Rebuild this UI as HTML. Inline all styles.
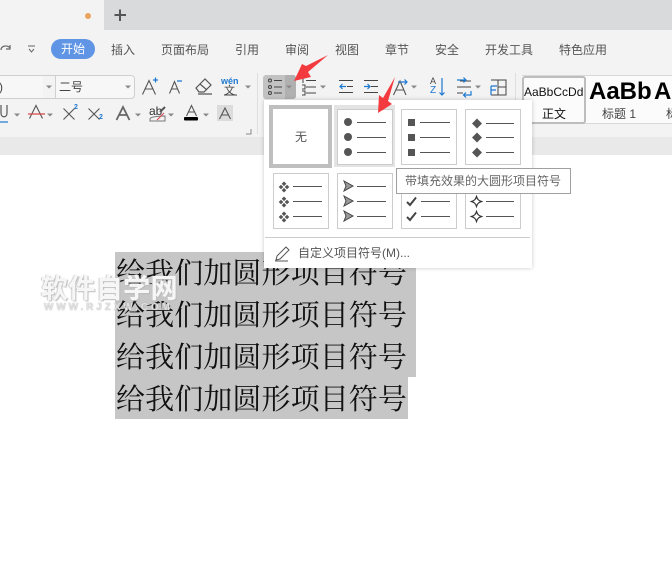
<!DOCTYPE html>
<html><head><meta charset="utf-8">
<style>
html,body{margin:0;padding:0;background:#fff}
#p{position:relative;width:672px;height:562px;overflow:hidden;background:#fff;font-family:"Liberation Sans","Noto Sans CJK SC",sans-serif;color:#444}
.a{position:absolute;white-space:nowrap}
.m{position:absolute;top:42px;font-size:12px;line-height:16px;color:#555;white-space:nowrap}
.l{position:absolute;left:116px;font-family:"Liberation Serif","Noto Serif CJK SC",serif;font-size:29px;line-height:42px;height:42px;letter-spacing:0.1px;color:#111;white-space:nowrap}
.cell{position:absolute;width:54px;height:54px;border:1px solid #ccc;background:#fff;box-sizing:content-box}
svg{position:absolute;overflow:visible}
</style></head><body><div id="p">

<!-- title bar -->
<div class="a" style="left:0;top:0;width:672px;height:30px;background:#d9dadc"></div>
<div class="a" style="left:0;top:0;width:104px;height:30px;background:#f3f3f3"></div>
<div class="a" style="left:85px;top:13px;width:6px;height:6px;border-radius:50%;background:#e6a35f"></div>
<svg style="left:0;top:0" width="672" height="160">
<path d="M114.500 15H126M120 9.500V21" stroke="#555" stroke-width="2" fill="none"/>
</svg>

<!-- ribbon -->
<div class="a" style="left:0;top:30px;width:672px;height:107px;background:#f3f3f3"></div>
<div class="a" style="left:0;top:137px;width:672px;height:18px;background:#e9e9e9"></div>

<div class="a" style="left:51px;top:39px;width:44px;height:20px;border-radius:10px;background:#5f95e4;color:#fff;font-size:12px;line-height:20px;text-align:center">开始</div>
<div class="m" style="left:111px">插入</div>
<div class="m" style="left:161px">页面布局</div>
<div class="m" style="left:235px">引用</div>
<div class="m" style="left:285px">审阅</div>
<div class="m" style="left:335px">视图</div>
<div class="m" style="left:385px">章节</div>
<div class="m" style="left:435px">安全</div>
<div class="m" style="left:485px">开发工具</div>
<div class="m" style="left:559px">特色应用</div>

<!-- font combos -->
<div class="a" style="left:-6px;top:75px;width:141px;height:24px;border:1px solid #cfcfcf;border-radius:4px;background:#f7f7f7;box-sizing:border-box"></div>
<div class="a" style="left:43px;top:76px;width:12px;height:22px;background:#f3f3f3"></div>
<div class="a" style="left:55px;top:76px;width:1px;height:22px;background:#d0d0d0"></div>
<div class="a" style="left:59px;top:79px;font-size:12px;line-height:16px;color:#444">二号</div>
<div class="a" style="left:-1px;top:79px;font-size:12px;line-height:16px;color:#444">)</div>

<div class="a" style="left:221px;top:76px;font-size:9px;line-height:10px;color:#1c78d0;font-weight:bold">wén</div>
<div class="a" style="left:224px;top:85px;font-size:11px;line-height:12px;color:#444">文</div>
<div class="a" style="left:149px;top:104px;font-size:12px;line-height:14px;color:#333">ab</div>
<div class="a" style="left:217px;top:105px;width:16px;height:16px;background:#dcdcdc"></div>
<div class="a" style="left:74px;top:104px;font-size:7px;line-height:8px;color:#1c78d0;font-weight:bold">2</div>
<div class="a" style="left:99px;top:114px;font-size:7px;line-height:8px;color:#1c78d0;font-weight:bold">2</div>
<div class="a" style="left:430px;top:76px;font-size:9px;line-height:10px;color:#444">A</div>
<div class="a" style="left:430px;top:86px;font-size:10px;line-height:10px;color:#1c78d0">Z</div>

<!-- list button highlight -->
<div class="a" style="left:263px;top:75px;width:33px;height:24px;background:#c2c2c2;border-radius:3px"></div>
<div class="a" style="left:285px;top:75px;width:11px;height:24px;background:#b0b0b0;border-radius:0 3px 3px 0"></div>

<svg style="left:0;top:0" width="672" height="160" fill="none">
<!-- undo / qa -->
<path d="M1 50C1 46 6 45 9 47L10 48M10 45V49H6" stroke="#666" stroke-width="1.200"/>
<path d="M28 46H35M29 49L31.500 52L34 49" stroke="#666"/>
<!-- thin A icons -->
<g stroke="#555" stroke-width="1.100">
<path d="M142.500 94.500L149 80.500L155.500 94.500M145 89H153"/>
<path d="M169.500 93.500L174.500 81.500L179.500 93.500M171.500 89H177.500"/>
<path d="M29.500 118.500L36 105.500L42.500 118.500"/>
<path d="M63.500 108.500L74.500 119.500M74.500 108.500L63.500 119.500"/>
<path d="M88.500 108.500L99.500 119.500M99.500 108.500L88.500 119.500"/>
<path d="M116.500 120L123 107L129.500 120M119 115H127" stroke-width="1.800" stroke="#666"/>
<path d="M186.500 116L191.500 105.500L196.500 116M188.500 112H194.500"/>
<path d="M219.500 119L225 108L230.500 119M221.500 115H228.500"/>
<path d="M393.500 95L400 81L406 95M396 90H404"/>
</g>
<!-- eraser -->
<path d="M196 88L205 79L211 85L204 92H199ZM200 84L207 90M198 94H212" stroke="#555" stroke-width="1.200"/>
<path d="M224 95H237" stroke="#444"/>
<!-- plus/minus -->
<path d="M153 80H158M155.500 77.500V82.500M177 81H182" stroke="#1c78d0" stroke-width="1.200"/>
<!-- underline -->
<path d="M1 105V113C1 118 7 118 7 113V105" stroke="#555" stroke-width="1.200"/>
<path d="M-2 122H8" stroke="#1c78d0" stroke-width="1.200"/>
<path d="M28 114H45" stroke="#d9464a" stroke-width="1.200"/>
<path d="M150 119C150 116 165 116 165 116V121H150Z" stroke="#777"/>
<path d="M157 120L164 113" stroke="#d9464a"/>
<path d="M160 112L165 107" stroke="#555" stroke-width="2"/>
<rect x="184" y="117" width="14" height="3.500" rx="1" fill="#000"/>
<!-- dialog launcher -->
<path d="M246 134H251V129" stroke="#888"/>
<path d="M257.500 73V134M515.500 73V134" stroke="#dedede"/>
<!-- carets -->
<path d="M245 85.500h6l-3 3zM14 113.500h6l-3 3zM47 113.500h6l-3 3zM135 113.500h6l-3 3zM168 113.500h6l-3 3zM203 113.500h6l-3 3zM286 85.500h6l-3 3zM320 85.500h6l-3 3zM411 85.500h6l-3 3zM475 85.500h6l-3 3zM46 85.500h6l-3 3zM125 85.500h6l-3 3z" fill="#888"/>
<!-- bullets icon -->
<g stroke="#444">
<circle cx="270" cy="80.500" r="1.500"/><circle cx="270" cy="87" r="1.500"/><circle cx="270" cy="93" r="1.500"/>
<path d="M274 80.500H282M274 87H282M274 93H282"/>
<path d="M306 80.500H316M306 87H316M306 93H316M303 78V83M302 85H305V89H302M302 91H305V95H302"/>
<!-- indents -->
<path d="M339 80.500H353M347 86.500H353M339 92.500H353"/>
<path d="M364 80.500H378M371 86.500H378M364 92.500H378"/>
<!-- line spacing -->
<path d="M460 81H471M457 87H471M457 93H463"/>
<!-- table -->
<path d="M491 80H506V95H491M498 80V95M498 87H506"/>
</g>
<g stroke="#1c78d0" stroke-width="1.200">
<path d="M340 86.500H346M342.500 84L340 86.500L342.500 89"/>
<path d="M364 86.500H370M367.500 84L370 86.500L367.500 89"/>
<path d="M398 82H407M404.500 79.500L407 82L404.500 84.500"/>
<path d="M442 78V95M439.500 92.500L442 95L444.500 92.500"/>
<path d="M457 80H466M463.500 77.500L466 80L463.500 82.500M471 91V95H464M466 92.500L463.500 95L466 97.500"/>
<path d="M491 86V95M491 86H497M491 90H496"/>
</g>
</svg>

<!-- styles gallery -->
<div class="a" style="left:522px;top:75px;width:150px;height:49px;background:#fbfbfb;border-top:1px solid #d8d8d8;border-bottom:1px solid #d8d8d8;box-sizing:border-box"></div>
<div class="a" style="left:522px;top:76px;width:64px;height:48px;background:#fbfbfb;border:2px solid #bdbdbd;border-radius:3px;box-sizing:border-box"></div>
<div class="a" style="left:524px;top:85px;font-size:12px;line-height:15px;color:#111">AaBbCcDd</div>
<div class="a" style="left:542px;top:107px;font-size:12px;line-height:15px;color:#111">正文</div>
<div class="a" style="left:589px;top:78px;font-size:24px;line-height:28px;font-weight:bold;color:#000">AaBb</div>
<div class="a" style="left:654px;top:78px;font-size:24px;line-height:28px;font-weight:bold;color:#000">Aa</div>
<div class="a" style="left:602px;top:107px;font-size:12px;line-height:15px;color:#444">标题 1</div>
<div class="a" style="left:666px;top:107px;font-size:12px;line-height:15px;color:#444">标</div>

<!-- selected document text -->
<div class="a" style="left:115px;top:252px;width:301px;height:125px;background:#c6c6c6"></div>
<div class="a" style="left:115px;top:377px;width:293px;height:42px;background:#c6c6c6"></div>
<div class="l" style="top:253px">给我们加圆形项目符号</div>
<div class="l" style="top:295px">给我们加圆形项目符号</div>
<div class="l" style="top:337px">给我们加圆形项目符号</div>
<div class="l" style="top:379px">给我们加圆形项目符号</div>

<!-- watermark -->
<div class="a" style="left:41px;top:274px;font-size:27px;line-height:30px;font-weight:bold;letter-spacing:0.400px;color:#f6f6f6;text-shadow:1px 1px 1px #bbb,-1px 0 1px #ccc">软件自学网</div>
<div class="a" style="left:44px;top:302px;font-size:10px;line-height:12px;font-weight:bold;letter-spacing:2.900px;color:#e2e2e2;text-shadow:0 0 1px #999">WWW.RJZXW.COM</div>

<!-- dropdown -->
<div class="a" style="left:264px;top:100px;width:268px;height:168px;background:#fff;box-shadow:0 0 4px rgba(0,0,0,.22)"></div>
<div class="a" style="left:269px;top:105px;width:63px;height:63px;background:#bfbfbf"></div>
<div class="a" style="left:273px;top:109px;width:55px;height:55px;background:#fff"></div>
<div class="a" style="left:295px;top:129px;font-size:12px;line-height:16px;color:#555">无</div>
<div class="a" style="left:334px;top:105px;width:61px;height:62px;background:#e4e4e4"></div>
<div class="cell" style="left:337px;top:109px"></div>
<div class="cell" style="left:401px;top:109px"></div>
<div class="cell" style="left:465px;top:109px"></div>
<div class="cell" style="left:273px;top:173px"></div>
<div class="cell" style="left:337px;top:173px"></div>
<div class="cell" style="left:401px;top:173px"></div>
<div class="cell" style="left:465px;top:173px"></div>
<div class="a" style="left:265px;top:237px;width:265px;height:1px;background:#ccc"></div>
<div class="a" style="left:298px;top:245px;font-size:12px;line-height:17px;color:#555">自定义项目符号(M)...</div>

<svg style="left:0;top:0" width="672" height="300" fill="none">
<!-- lines -->
<g stroke="#555" stroke-width="1.100">
<path d="M357 122.500H386M357 137.500H386M357 152.500H386"/>
<path d="M420 122.500H450M420 137.500H450M420 152.500H450"/>
<path d="M486 123.500H514M486 137.500H514M486 152.500H514"/>
<path d="M293 186.500H322M293 201.500H322M293 216.500H322"/>
<path d="M357 186.500H386M357 201.500H386M357 216.500H386"/>
<path d="M421 201.500H450M421 216.500H450"/>
<path d="M486 201.500H514M486 216.500H514"/>
</g>
<g fill="#555"><circle cx="348" cy="122" r="4"/><circle cx="348" cy="137" r="4"/><circle cx="348" cy="152" r="4"/>
<rect x="408" y="119" width="7" height="7"/><rect x="408" y="134" width="7" height="7"/><rect x="408" y="149" width="7" height="7"/>
<path d="M477 118.500L482 123.500L477 128.500L472 123.500ZM477 132.500L482 137.500L477 142.500L472 137.500ZM477 147.500L482 152.500L477 157.500L472 152.500Z"/>
<!-- four-diamond clusters -->
<path d="M284 181.500l2.300 2.300-2.300 2.300-2.300-2.300zM281 184.700l2.300 2.300-2.300 2.300-2.300-2.300zM287 184.700l2.300 2.300-2.300 2.300-2.300-2.300zM284 187.900l2.300 2.300-2.300 2.300-2.300-2.300z"/>
<path d="M284 196.500l2.300 2.300-2.300 2.300-2.300-2.300zM281 199.700l2.300 2.300-2.300 2.300-2.300-2.300zM287 199.700l2.300 2.300-2.300 2.300-2.300-2.300zM284 202.900l2.300 2.300-2.300 2.300-2.300-2.300z"/>
<path d="M284 211.500l2.300 2.300-2.300 2.300-2.300-2.300zM281 214.700l2.300 2.300-2.300 2.300-2.300-2.300zM287 214.700l2.300 2.300-2.300 2.300-2.300-2.300zM284 217.900l2.300 2.300-2.300 2.300-2.300-2.300z"/>
<!-- arrow -->
<path d="M344 181L353 186L344 191L346 186Z M344 196L353 201L344 206L346 201Z M344 211L353 216L344 221L346 216Z" stroke="#444" stroke-width="1" fill="#999"/>
</g>
<!-- check -->
<path d="M407 202L410 205L416 197.500M407 217L410 220L416 212.500" stroke="#444" stroke-width="2"/>
<!-- open star -->
<path d="M476.500 196.500C477.500 199.500 478.500 200.500 481.500 201.500C478.500 202.500 477.500 203.500 476.500 206.500C475.500 203.500 474.500 202.500 471.500 201.500C474.500 200.500 475.500 199.500 476.500 196.500ZM476.500 211.500C477.500 214.500 478.500 215.500 481.500 216.500C478.500 217.500 477.500 218.500 476.500 221.500C475.500 218.500 474.500 217.500 471.500 216.500C474.500 215.500 475.500 214.500 476.500 211.500Z" stroke="#333" stroke-width="1.200"/>
<!-- pencil -->
<path d="M277 256L286 247L289 250L280 259L276 260ZM275 261H288" stroke="#555" stroke-width="1"/>
<!-- red arrows -->
<path d="M328 55L306 66L302 64L294 81L311 77L308 72Z" fill="#f33b3f"/>
<path d="M395 77L383 98L379 95L378 113L392 104L388 101Z" fill="#f33b3f"/>
</svg>

<!-- tooltip -->
<div class="a" style="left:396px;top:168px;width:175px;height:26px;background:#fff;border:1px solid #a0a0a0;box-sizing:border-box;font-size:12px;line-height:24px;padding-left:8px;color:#666">带填充效果的大圆形项目符号</div>

</div></body></html>
